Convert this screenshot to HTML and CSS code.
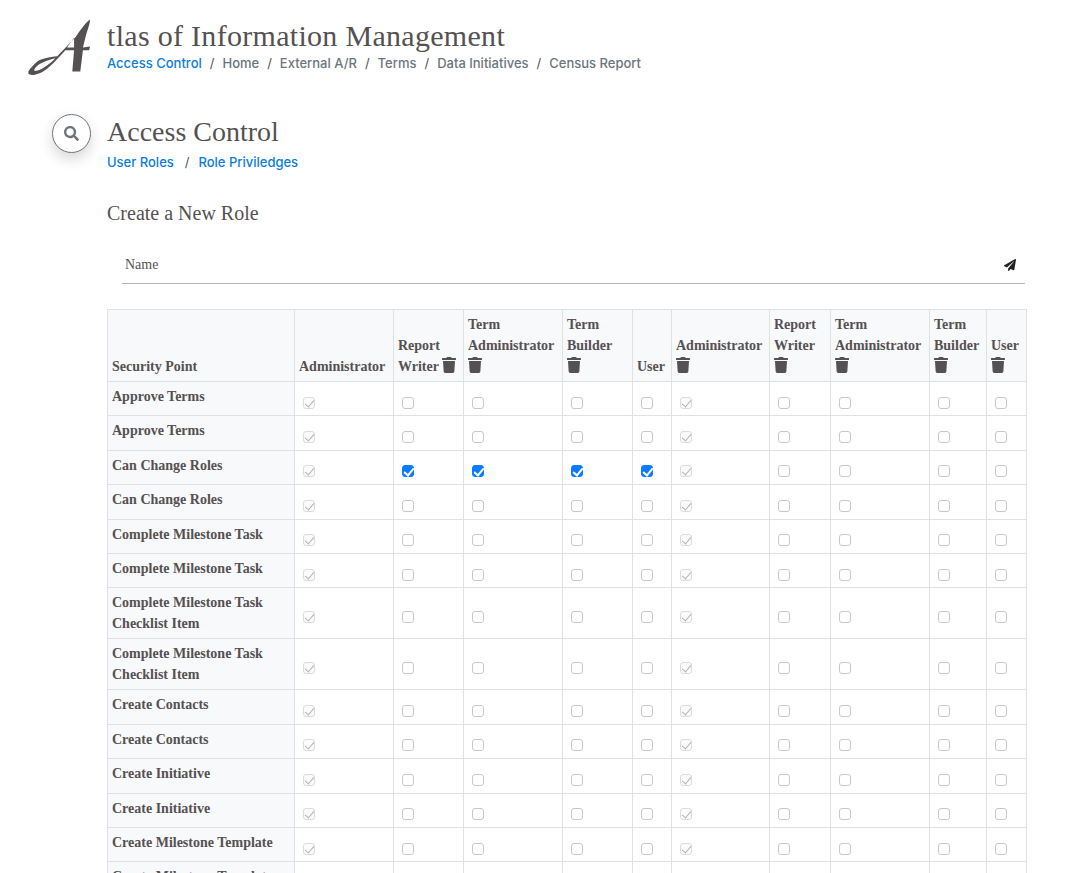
FILE: index.html
```html
<!DOCTYPE html>
<html lang="en">
<head>
<meta charset="utf-8">
<title>Access Control</title>
<link rel="stylesheet" href="styles.css">
</head>
<body>
<svg class="defs" width="0" height="0" aria-hidden="true">
  <symbol id="trash" viewBox="0 0 448 512"><path d="M432 32H312l-9.4-18.7A24 24 0 0 0 281.1 0H166.8a23.72 23.72 0 0 0-21.4 13.3L136 32H16A16 16 0 0 0 0 48v32a16 16 0 0 0 16 16h416a16 16 0 0 0 16-16V48a16 16 0 0 0-16-16zM53.2 467a48 48 0 0 0 47.9 45h245.8a48 48 0 0 0 47.9-45L416 128H32z"/></symbol>
</svg>
<header class="site-header">
  <svg class="logo" viewBox="0 0 79 64" aria-hidden="true">
    <path d="M70 0.5C66 3 60 11 54 20L33 42C25 43 14 44 8 50C3 55 -1 59 0.8 62C3 64 12 63 20 57C27 52 35 43 42 35L52 35L50 59L59 59L62 35L69 35L70 31L62 32L65 20C67 12 70 6 70 0.5ZM52 21L52 32L44 32ZM31 44C25 50 17 56 11 58C7 59 6 58 8 55C12 50 21 46 31 44Z" fill-rule="evenodd"/>
  </svg>
  <div class="header-text">
    <h1 class="site-title">tlas of Information Management</h1>
    <nav class="crumbs">
      <a class="link" href="#">Access Control</a><span class="sep">/</span><a class="muted" href="#">Home</a><span class="sep">/</span><a class="muted" href="#">External A/R</a><span class="sep">/</span><a class="muted" href="#">Terms</a><span class="sep">/</span><a class="muted" href="#">Data Initiatives</a><span class="sep">/</span><a class="muted" href="#">Census Report</a>
    </nav>
  </div>
</header>
<div class="page">
  <button class="search-btn" type="button" aria-label="Search">
    <svg viewBox="0 0 512 512" width="15" height="15"><path d="M505 442.7L405.3 343c-4.500-4.500-10.600-7-17-7H372c27.600-35.300 44-79.700 44-128C416 93.100 322.900 0 208 0S0 93.100 0 208s93.100 208 208 208c48.300 0 92.700-16.400 128-44v16.300c0 6.400 2.500 12.500 7 17l99.700 99.700c9.400 9.400 24.600 9.400 33.900 0l28.300-28.300c9.400-9.400 9.400-24.600.1-34zM208 336c-70.700 0-128-57.200-128-128 0-70.700 57.200-128 128-128 70.700 0 128 57.200 128 128 0 70.700-57.200 128-128 128z"/></svg>
  </button>
  <main class="content">
    <h2 class="page-title">Access Control</h2>
    <nav class="subnav"><a class="link" href="#">User Roles</a><span class="sep wide">/</span><a class="link" href="#">Role Priviledges</a></nav>
    <h3 class="section-title">Create a New Role</h3>
    <form class="name-field">
      <span class="name-label">Name</span>
      <svg class="send" viewBox="0 0 512 512" width="12" height="12"><path d="M476 3.200L12.500 270.600c-18.100 10.400-15.800 35.600 2.200 43.200L121 358.400l287.300-253.200c5.500-4.900 13.300 2.600 8.600 8.300L176 407v80.500c0 23.600 28.500 32.900 42.500 15.800L282 426l124.600 52.200c14.200 6 30.400-2.900 33-18.200l72-432C515 7.800 493.300-6.800 476 3.200z"/></svg>
    </form>
    <table class="roles">
      <colgroup>
        <col class="c-point"><col class="c-admin"><col class="c-writer"><col class="c-term"><col class="c-builder"><col class="c-user"><col class="c-admin2"><col class="c-writer2"><col class="c-term"><col class="c-builder2"><col class="c-user2">
      </colgroup>
      <thead>
        <tr>
          <th>Security Point</th>
          <th>Administrator</th>
          <th>Report Writer <svg class="trash"><use href="#trash"/></svg></th>
          <th>Term Administrator <svg class="trash"><use href="#trash"/></svg></th>
          <th>Term Builder <svg class="trash"><use href="#trash"/></svg></th>
          <th>User</th>
          <th>Administrator <svg class="trash"><use href="#trash"/></svg></th>
          <th>Report Writer <svg class="trash"><use href="#trash"/></svg></th>
          <th>Term Administrator <svg class="trash"><use href="#trash"/></svg></th>
          <th>Term Builder <svg class="trash"><use href="#trash"/></svg></th>
          <th>User <svg class="trash"><use href="#trash"/></svg></th>
        </tr>
      </thead>
      <tbody id="rows"></tbody>
    </table>
  </main>
</div>
<script src="app.js"></script>
</body>
</html>
```
FILE: app.js
```js
var points = ["Approve Terms","Approve Terms","Can Change Roles","Can Change Roles","Complete Milestone Task","Complete Milestone Task","Complete Milestone Task Checklist Item","Complete Milestone Task Checklist Item","Create Contacts","Create Contacts","Create Initiative","Create Initiative","Create Milestone Template","Create Milestone Template"];
var html = "";
points.forEach(function (p, r) {
  html += "<tr><th>" + p + "</th>";
  for (var c = 0; c < 10; c++) {
    var locked = c === 0 || c === 5;
    var on = r === 2 && c >= 1 && c <= 4;
    html += '<td><input type="checkbox"' + (locked ? " checked disabled" : "") + (on ? " checked" : "") + "></td>";
  }
  html += "</tr>";
});
document.getElementById("rows").innerHTML = html;
```
FILE: styles.css
```css
* { box-sizing: border-box; }
html, body { margin: 0; padding: 0; }
body { background: #fff; color: #555152; font-family: "Liberation Serif", serif; height: 873px; overflow: hidden; }
.defs { position: absolute; }
a { text-decoration: none; }
.link { color: #0a7ddb; }
.muted { color: #6c757d; }
.site-header { display: flex; align-items: flex-start; padding: 16px 0 0 28px; }
.logo { width: 70px; height: 63px; fill: #555152; flex: none; }
.header-text { margin-left: 9px; }
.site-title { margin: 0; font-size: 30px; line-height: 40px; font-weight: 400; letter-spacing: .3px; }
.crumbs, .subnav { font-family: Inter, sans-serif; font-size: 13px; line-height: 18px; font-weight: 500; }
.crumbs { margin-top: -2px; }
.sep { color: #555152; margin: 0 8px; font-weight: 400; }
.sep.wide { margin: 0 9px 0 11px; }
.page { display: flex; padding: 35px 49px 0 52px; align-items: flex-start; }
.search-btn { flex: none; width: 39px; height: 39px; margin-top: 0; border: 1px solid #6c757d; border-radius: 50%; background: #fff; fill: #6c757d; display: flex; align-items: center; justify-content: center; padding: 0; box-shadow: 0 6px 14px rgba(0,0,0,.16); }
.content { margin-left: 16px; flex: 1; min-width: 0; }
.page-title { margin: 0; font-size: 28px; line-height: 36px; font-weight: 400; }
.subnav { margin-top: 3px; }
.section-title { margin: 29px 0 0; font-size: 20px; line-height: 26px; font-weight: 400; }
.name-field { display: flex; justify-content: space-between; align-items: center; margin: 20px 0 25px 15px; height: 38px; padding: 0 9px 0 3px; border-bottom: 1px solid #b5b5b5; font-size: 14px; }
.send { fill: #222; }
.roles { border-collapse: collapse; table-layout: fixed; width: 918px; font-size: 14px; line-height: 21px; }
.c-point { width: 187px; } .c-admin { width: 99px; } .c-writer { width: 70px; } .c-term { width: 99px; } .c-builder { width: 70px; } .c-user { width: 39px; } .c-admin2 { width: 98px; } .c-writer2 { width: 61px; } .c-builder2 { width: 57px; } .c-user2 { width: 40px; }
.roles th, .roles td { border: 1px solid #dee2e6; padding: 4px; text-align: left; }
.roles th { font-weight: 700; background: #f8f9fa; vertical-align: top; }
.roles thead th { vertical-align: bottom; }
.roles td { height: 34.4px; vertical-align: middle; background: #fff; padding: 8px 0 0 7px; }
.trash { width: 14px; height: 16px; fill: #555152; vertical-align: -2px; }
input[type=checkbox] { width: 12px; height: 12px; margin: 0 0 0 1px; display: block; appearance: none; background: #fff; border: 1px solid #c6c8cc; border-radius: 3px; }
input[type=checkbox]:disabled { background: #fbfbfb; border-color: #dcdcdc; position: relative; }
input[type=checkbox]:disabled::after { content: ""; position: absolute; left: 3px; top: 0; width: 4px; height: 8px; border: solid #b3b3b3; border-width: 0 1px 1px 0; transform: rotate(40deg); }
input[type=checkbox]:checked:not(:disabled) { background: #0a7aff; border-color: #0a7aff; position: relative; }
input[type=checkbox]:checked:not(:disabled)::after { content: ""; position: absolute; left: 3px; top: 0; width: 4px; height: 8px; border: solid #fff; border-width: 0 2px 2px 0; transform: rotate(40deg); }
```
